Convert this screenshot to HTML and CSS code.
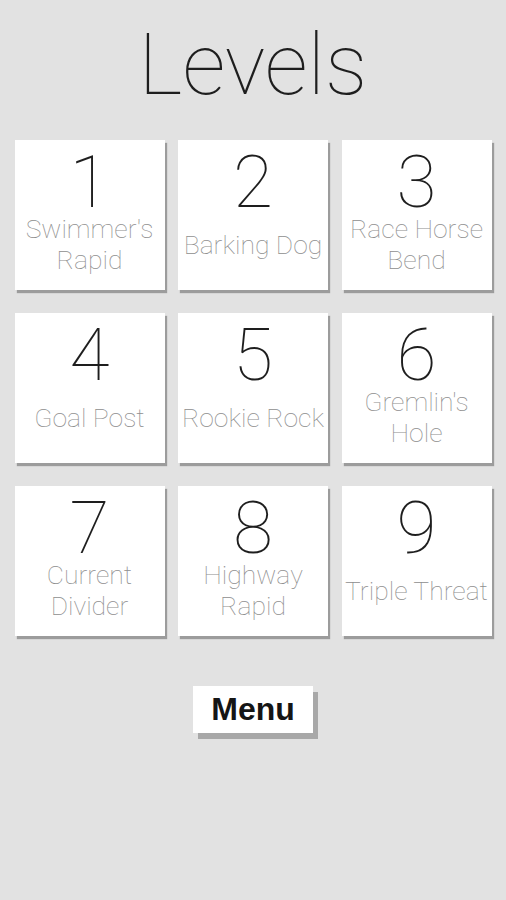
FILE: index.html
```html
<!DOCTYPE html>
<html lang="en">
<head>
  <meta charset="UTF-8" />
  <meta name="viewport" content="width=device-width, initial-scale=1.0" />
  <title>Levels</title>
  <link rel="stylesheet" href="styles.css">
</head>
<body>
  <h1 class="title">Levels</h1>

  <div class="levels">
    <div class="level"><div class="num">1</div><div class="name">Swimmer's Rapid</div></div>
    <div class="level"><div class="num">2</div><div class="name">Barking Dog</div></div>
    <div class="level"><div class="num">3</div><div class="name">Race Horse Bend</div></div>
    <div class="level"><div class="num">4</div><div class="name">Goal Post</div></div>
    <div class="level"><div class="num">5</div><div class="name">Rookie Rock</div></div>
    <div class="level"><div class="num">6</div><div class="name">Gremlin's Hole</div></div>
    <div class="level"><div class="num">7</div><div class="name">Current Divider</div></div>
    <div class="level"><div class="num">8</div><div class="name">Highway Rapid</div></div>
    <div class="level"><div class="num">9</div><div class="name">Triple Threat</div></div>
  </div>

  <div class="bottom">
    <button class="menu">Menu</button>
  </div>
</body>
</html>
```

FILE: styles.css
```css
body {
  margin: 0;
  background: #e2e2e2;
  font-family: Roboto, "Liberation Sans", sans-serif;
}
.title {
  margin: 23px 0 0;
  height: 117px;
  font-size: 85px;
  line-height: 85px;
  font-weight: 100;
  color: #1e1e1e;
  text-align: center;
}
.levels {
  display: grid;
  grid-template-columns: repeat(3, 150px);
  column-gap: 13.5px;
  row-gap: 23px;
  justify-content: center;
}
.level {
  height: 150px;
  background: #fff;
  box-shadow: 2px 3px 1px #9c9c9c;
  display: flex;
  flex-direction: column;
  align-items: center;
  box-sizing: border-box;
  padding: 12px 0 14px;
}
.num {
  font-size: 73px;
  line-height: 60px;
  height: 60px;
  font-weight: 100;
  color: #1e1e1e;
}
.name {
  flex: 1;
  display: flex;
  align-items: center;
  justify-content: center;
  text-align: center;
  font-size: 26.5px;
  line-height: 31px;
  font-weight: 100;
  color: #8e8e8e;
  width: 100%;
}
.bottom {
  display: flex;
  justify-content: center;
  padding: 50px 0 20px;
}
.menu {
  width: 120px;
  height: 47px;
  border: none;
  background: #fff;
  box-shadow: 5px 6px 0 #a8a8a8;
  font-family: "Liberation Sans", Arial, sans-serif;
  font-weight: bold;
  font-size: 32px;
  color: #151515;
  padding: 0;
}
```
